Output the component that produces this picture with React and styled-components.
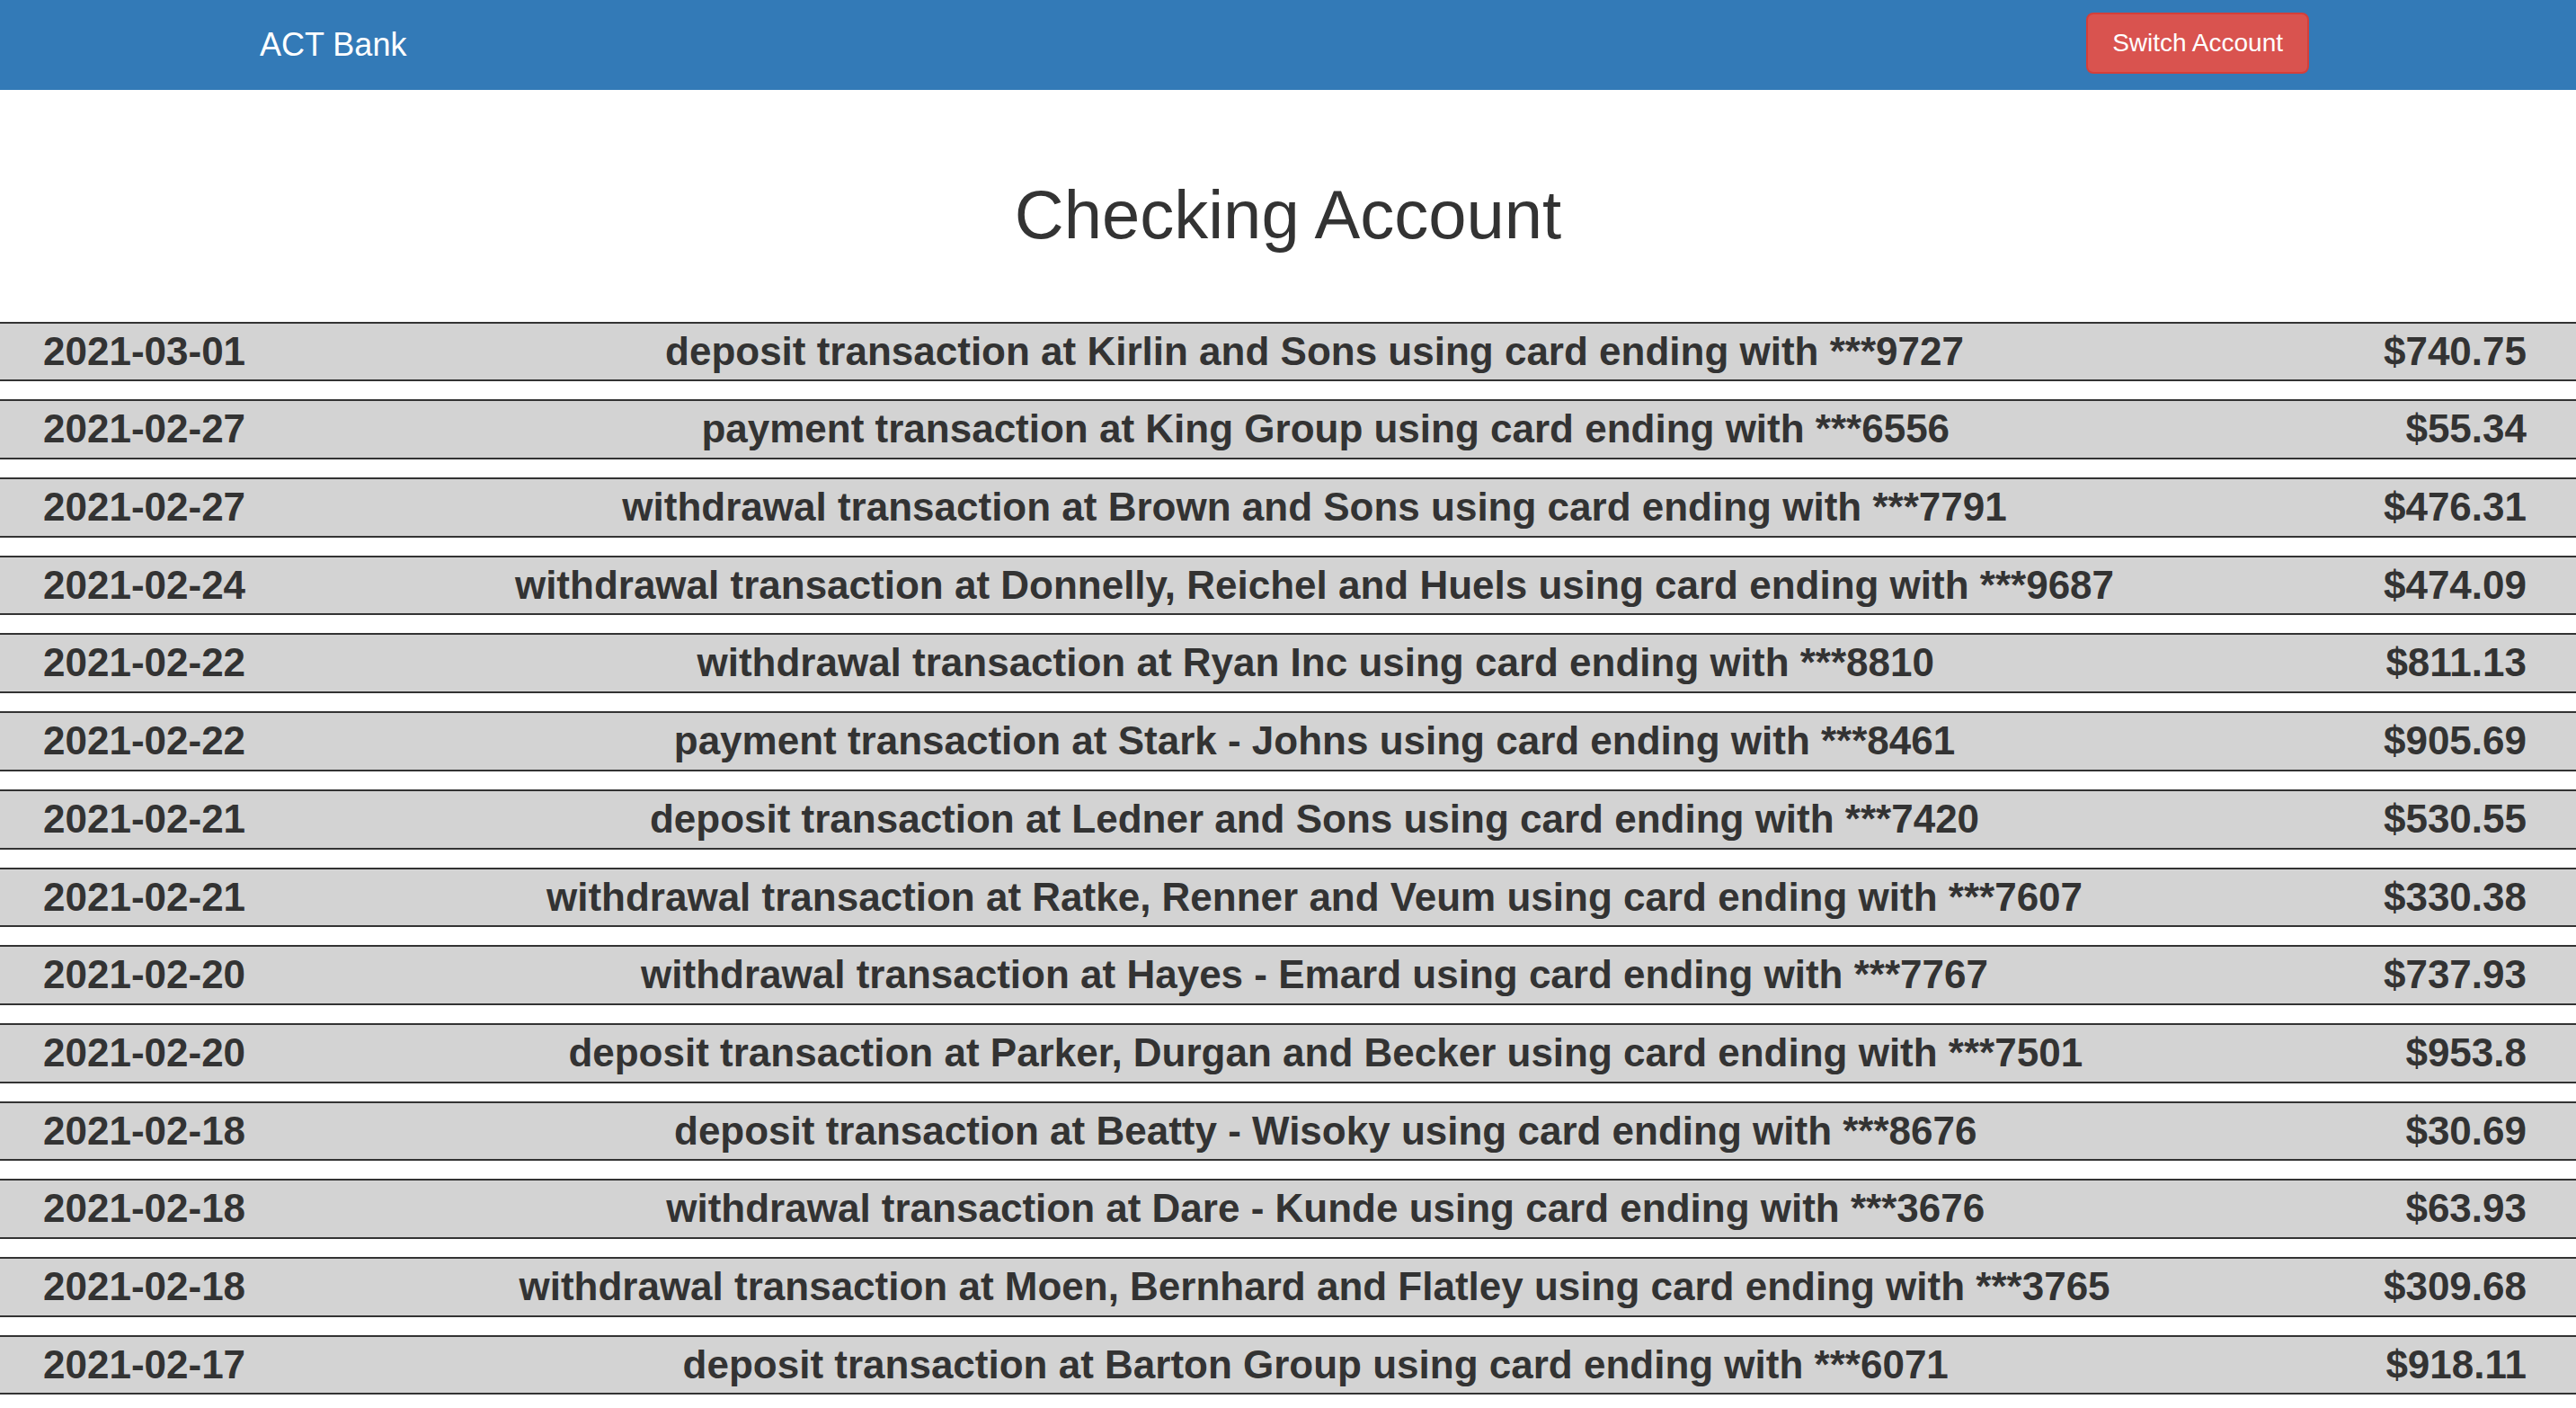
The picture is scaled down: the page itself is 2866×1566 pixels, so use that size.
import React from 'react';
import styled, {createGlobalStyle} from 'styled-components';

const GlobalStyle = createGlobalStyle`
body{
margin: 0;
background-color: white;
font-family: "Liberation Sans", Arial, Helvetica, sans-serif;
color: #333;
}
`

const Page = styled.div`
display: flex;
flex-flow: column;
width: 100%;
`
const Navbar = styled.div`
display: flex;
justify-content: space-between;
align-items: flex-start;
height: 100px;
padding: 0 297px 0 259px;
background-color: #337ab7;
`
const Brand = styled.div`
padding: 30px;
font-size: 36px;
line-height: 40px;
color: white;
`
const SwitchButton = styled.button`
margin-top: 14px;
padding: 12px 27px;
font-family: "Liberation Sans", Arial, Helvetica, sans-serif;
font-size: 28px;
line-height: 40px;
color: white;
background-color: #d9534f;
border: 2px solid #d43f3a;
border-radius: 8px;
cursor: pointer;
&:hover{
background-color: #c9302c;
}
`
const Title = styled.h1`
margin: 0 0 77px 0;
padding-top: 97px;
text-align: center;
font-size: 76px;
font-weight: 500;
line-height: 1.1;
color: #333;
`
const List = styled.div`
display: flex;
flex-flow: column;
gap: 20px;
`
const Row = styled.div`
display: flex;
align-items: center;
padding: 0 55px 0 48px;
background-color: #d3d3d3;
border-top: 2px solid #333;
border-bottom: 2px solid #333;
font-size: 44px;
font-weight: bold;
line-height: 62.7px;
color: #333;
white-space: nowrap;
`
const Cell = styled.div`
flex: ${props => props.grow ? 1 : 'none'};
text-align: ${props => props.align || 'left'};
`

const transactions = [
    {date: '2021-03-01', text: 'deposit transaction at Kirlin and Sons using card ending with ***9727', amount: '$740.75'},
    {date: '2021-02-27', text: 'payment transaction at King Group using card ending with ***6556', amount: '$55.34'},
    {date: '2021-02-27', text: 'withdrawal transaction at Brown and Sons using card ending with ***7791', amount: '$476.31'},
    {date: '2021-02-24', text: 'withdrawal transaction at Donnelly, Reichel and Huels using card ending with ***9687', amount: '$474.09'},
    {date: '2021-02-22', text: 'withdrawal transaction at Ryan Inc using card ending with ***8810', amount: '$811.13'},
    {date: '2021-02-22', text: 'payment transaction at Stark - Johns using card ending with ***8461', amount: '$905.69'},
    {date: '2021-02-21', text: 'deposit transaction at Ledner and Sons using card ending with ***7420', amount: '$530.55'},
    {date: '2021-02-21', text: 'withdrawal transaction at Ratke, Renner and Veum using card ending with ***7607', amount: '$330.38'},
    {date: '2021-02-20', text: 'withdrawal transaction at Hayes - Emard using card ending with ***7767', amount: '$737.93'},
    {date: '2021-02-20', text: 'deposit transaction at Parker, Durgan and Becker using card ending with ***7501', amount: '$953.8'},
    {date: '2021-02-18', text: 'deposit transaction at Beatty - Wisoky using card ending with ***8676', amount: '$30.69'},
    {date: '2021-02-18', text: 'withdrawal transaction at Dare - Kunde using card ending with ***3676', amount: '$63.93'},
    {date: '2021-02-18', text: 'withdrawal transaction at Moen, Bernhard and Flatley using card ending with ***3765', amount: '$309.68'},
    {date: '2021-02-17', text: 'deposit transaction at Barton Group using card ending with ***6071', amount: '$918.11'},
];

export default function App() {
    return (
        <Page>
            <GlobalStyle/>
            <Navbar>
                <Brand>ACT Bank</Brand>
                <SwitchButton>Switch Account</SwitchButton>
            </Navbar>
            <Title>Checking Account</Title>
            <List>
                {transactions.map((item, index) => (
                    <Row key={index}>
                        <Cell>{item.date}</Cell>
                        <Cell grow align="center">{item.text}</Cell>
                        <Cell align="right">{item.amount}</Cell>
                    </Row>
                ))}
            </List>
        </Page>
    );
}
